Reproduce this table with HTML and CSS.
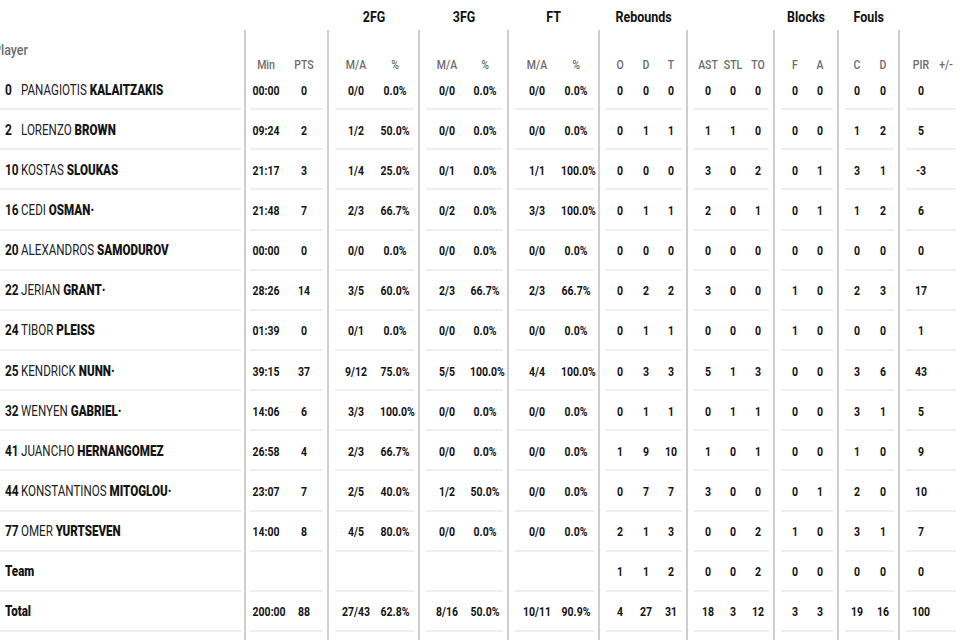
FILE: index.html
```html
<!DOCTYPE html>
<html lang="en">
<head>
<meta charset="utf-8">
<title>Box score</title>
<link rel="stylesheet" href="styles.css">
</head>
<body>
<table class="box">
  <colgroup>
    <col class="w-player"><col class="w-min"><col class="w-2fg"><col class="w-3fg"><col class="w-ft"><col class="w-reb"><col class="w-ast"><col class="w-blk"><col class="w-fls"><col class="w-pir">
  </colgroup>
  <thead>
    <tr class="titles">
      <th></th><th></th><th><span class="t">2FG</span></th><th><span class="t">3FG</span></th><th><span class="t">FT</span></th><th><span class="t">Rebounds</span></th><th></th><th><span class="t">Blocks</span></th><th><span class="t">Fouls</span></th><th></th>
    </tr>
    <tr class="sub">
      <th><div class="in"><span class="plab">Player</span></div></th>
      <th><div class="in"><span class="c">Min</span><span class="c">PTS</span></div></th>
      <th><div class="in"><span class="c">M/A</span><span class="c">%</span></div></th>
      <th><div class="in"><span class="c">M/A</span><span class="c">%</span></div></th>
      <th><div class="in"><span class="c">M/A</span><span class="c">%</span></div></th>
      <th><div class="in"><span class="c">O</span><span class="c">D</span><span class="c">T</span></div></th>
      <th><div class="in"><span class="c">AST</span><span class="c">STL</span><span class="c">TO</span></div></th>
      <th><div class="in"><span class="c">F</span><span class="c">A</span></div></th>
      <th><div class="in"><span class="c">C</span><span class="c">D</span></div></th>
      <th><div class="in"><span class="c">PIR</span><span class="c">+/-</span></div></th>
    </tr>
  </thead>
  <tbody>
    <tr>
      <td><div class="in"><span class="no">0</span><span class="nm"><span class="fn">PANAGIOTIS</span> <b>KALAITZAKIS</b></span></div></td>
      <td><div class="in"><span class="c">00:00</span><span class="c">0</span></div></td>
      <td><div class="in"><span class="c">0/0</span><span class="c">0.0%</span></div></td>
      <td><div class="in"><span class="c">0/0</span><span class="c">0.0%</span></div></td>
      <td><div class="in"><span class="c">0/0</span><span class="c">0.0%</span></div></td>
      <td><div class="in"><span class="c">0</span><span class="c">0</span><span class="c">0</span></div></td>
      <td><div class="in"><span class="c">0</span><span class="c">0</span><span class="c">0</span></div></td>
      <td><div class="in"><span class="c">0</span><span class="c">0</span></div></td>
      <td><div class="in"><span class="c">0</span><span class="c">0</span></div></td>
      <td><div class="in"><span class="c">0</span><span class="c"></span></div></td>
    </tr>
    <tr>
      <td><div class="in"><span class="no">2</span><span class="nm"><span class="fn">LORENZO</span> <b>BROWN</b></span></div></td>
      <td><div class="in"><span class="c">09:24</span><span class="c">2</span></div></td>
      <td><div class="in"><span class="c">1/2</span><span class="c">50.0%</span></div></td>
      <td><div class="in"><span class="c">0/0</span><span class="c">0.0%</span></div></td>
      <td><div class="in"><span class="c">0/0</span><span class="c">0.0%</span></div></td>
      <td><div class="in"><span class="c">0</span><span class="c">1</span><span class="c">1</span></div></td>
      <td><div class="in"><span class="c">1</span><span class="c">1</span><span class="c">0</span></div></td>
      <td><div class="in"><span class="c">0</span><span class="c">0</span></div></td>
      <td><div class="in"><span class="c">1</span><span class="c">2</span></div></td>
      <td><div class="in"><span class="c">5</span><span class="c"></span></div></td>
    </tr>
    <tr>
      <td><div class="in"><span class="no">10</span><span class="nm"><span class="fn">KOSTAS</span> <b>SLOUKAS</b></span></div></td>
      <td><div class="in"><span class="c">21:17</span><span class="c">3</span></div></td>
      <td><div class="in"><span class="c">1/4</span><span class="c">25.0%</span></div></td>
      <td><div class="in"><span class="c">0/1</span><span class="c">0.0%</span></div></td>
      <td><div class="in"><span class="c">1/1</span><span class="c">100.0%</span></div></td>
      <td><div class="in"><span class="c">0</span><span class="c">0</span><span class="c">0</span></div></td>
      <td><div class="in"><span class="c">3</span><span class="c">0</span><span class="c">2</span></div></td>
      <td><div class="in"><span class="c">0</span><span class="c">1</span></div></td>
      <td><div class="in"><span class="c">3</span><span class="c">1</span></div></td>
      <td><div class="in"><span class="c">-3</span><span class="c"></span></div></td>
    </tr>
    <tr>
      <td><div class="in"><span class="no">16</span><span class="nm"><span class="fn">CEDI</span> <b>OSMAN·</b></span></div></td>
      <td><div class="in"><span class="c">21:48</span><span class="c">7</span></div></td>
      <td><div class="in"><span class="c">2/3</span><span class="c">66.7%</span></div></td>
      <td><div class="in"><span class="c">0/2</span><span class="c">0.0%</span></div></td>
      <td><div class="in"><span class="c">3/3</span><span class="c">100.0%</span></div></td>
      <td><div class="in"><span class="c">0</span><span class="c">1</span><span class="c">1</span></div></td>
      <td><div class="in"><span class="c">2</span><span class="c">0</span><span class="c">1</span></div></td>
      <td><div class="in"><span class="c">0</span><span class="c">1</span></div></td>
      <td><div class="in"><span class="c">1</span><span class="c">2</span></div></td>
      <td><div class="in"><span class="c">6</span><span class="c"></span></div></td>
    </tr>
    <tr>
      <td><div class="in"><span class="no">20</span><span class="nm"><span class="fn">ALEXANDROS</span> <b>SAMODUROV</b></span></div></td>
      <td><div class="in"><span class="c">00:00</span><span class="c">0</span></div></td>
      <td><div class="in"><span class="c">0/0</span><span class="c">0.0%</span></div></td>
      <td><div class="in"><span class="c">0/0</span><span class="c">0.0%</span></div></td>
      <td><div class="in"><span class="c">0/0</span><span class="c">0.0%</span></div></td>
      <td><div class="in"><span class="c">0</span><span class="c">0</span><span class="c">0</span></div></td>
      <td><div class="in"><span class="c">0</span><span class="c">0</span><span class="c">0</span></div></td>
      <td><div class="in"><span class="c">0</span><span class="c">0</span></div></td>
      <td><div class="in"><span class="c">0</span><span class="c">0</span></div></td>
      <td><div class="in"><span class="c">0</span><span class="c"></span></div></td>
    </tr>
    <tr>
      <td><div class="in"><span class="no">22</span><span class="nm"><span class="fn">JERIAN</span> <b>GRANT·</b></span></div></td>
      <td><div class="in"><span class="c">28:26</span><span class="c">14</span></div></td>
      <td><div class="in"><span class="c">3/5</span><span class="c">60.0%</span></div></td>
      <td><div class="in"><span class="c">2/3</span><span class="c">66.7%</span></div></td>
      <td><div class="in"><span class="c">2/3</span><span class="c">66.7%</span></div></td>
      <td><div class="in"><span class="c">0</span><span class="c">2</span><span class="c">2</span></div></td>
      <td><div class="in"><span class="c">3</span><span class="c">0</span><span class="c">0</span></div></td>
      <td><div class="in"><span class="c">1</span><span class="c">0</span></div></td>
      <td><div class="in"><span class="c">2</span><span class="c">3</span></div></td>
      <td><div class="in"><span class="c">17</span><span class="c"></span></div></td>
    </tr>
    <tr>
      <td><div class="in"><span class="no">24</span><span class="nm"><span class="fn">TIBOR</span> <b>PLEISS</b></span></div></td>
      <td><div class="in"><span class="c">01:39</span><span class="c">0</span></div></td>
      <td><div class="in"><span class="c">0/1</span><span class="c">0.0%</span></div></td>
      <td><div class="in"><span class="c">0/0</span><span class="c">0.0%</span></div></td>
      <td><div class="in"><span class="c">0/0</span><span class="c">0.0%</span></div></td>
      <td><div class="in"><span class="c">0</span><span class="c">1</span><span class="c">1</span></div></td>
      <td><div class="in"><span class="c">0</span><span class="c">0</span><span class="c">0</span></div></td>
      <td><div class="in"><span class="c">1</span><span class="c">0</span></div></td>
      <td><div class="in"><span class="c">0</span><span class="c">0</span></div></td>
      <td><div class="in"><span class="c">1</span><span class="c"></span></div></td>
    </tr>
    <tr>
      <td><div class="in"><span class="no">25</span><span class="nm"><span class="fn">KENDRICK</span> <b>NUNN·</b></span></div></td>
      <td><div class="in"><span class="c">39:15</span><span class="c">37</span></div></td>
      <td><div class="in"><span class="c">9/12</span><span class="c">75.0%</span></div></td>
      <td><div class="in"><span class="c">5/5</span><span class="c">100.0%</span></div></td>
      <td><div class="in"><span class="c">4/4</span><span class="c">100.0%</span></div></td>
      <td><div class="in"><span class="c">0</span><span class="c">3</span><span class="c">3</span></div></td>
      <td><div class="in"><span class="c">5</span><span class="c">1</span><span class="c">3</span></div></td>
      <td><div class="in"><span class="c">0</span><span class="c">0</span></div></td>
      <td><div class="in"><span class="c">3</span><span class="c">6</span></div></td>
      <td><div class="in"><span class="c">43</span><span class="c"></span></div></td>
    </tr>
    <tr>
      <td><div class="in"><span class="no">32</span><span class="nm"><span class="fn">WENYEN</span> <b>GABRIEL·</b></span></div></td>
      <td><div class="in"><span class="c">14:06</span><span class="c">6</span></div></td>
      <td><div class="in"><span class="c">3/3</span><span class="c">100.0%</span></div></td>
      <td><div class="in"><span class="c">0/0</span><span class="c">0.0%</span></div></td>
      <td><div class="in"><span class="c">0/0</span><span class="c">0.0%</span></div></td>
      <td><div class="in"><span class="c">0</span><span class="c">1</span><span class="c">1</span></div></td>
      <td><div class="in"><span class="c">0</span><span class="c">1</span><span class="c">1</span></div></td>
      <td><div class="in"><span class="c">0</span><span class="c">0</span></div></td>
      <td><div class="in"><span class="c">3</span><span class="c">1</span></div></td>
      <td><div class="in"><span class="c">5</span><span class="c"></span></div></td>
    </tr>
    <tr>
      <td><div class="in"><span class="no">41</span><span class="nm"><span class="fn">JUANCHO</span> <b>HERNANGOMEZ</b></span></div></td>
      <td><div class="in"><span class="c">26:58</span><span class="c">4</span></div></td>
      <td><div class="in"><span class="c">2/3</span><span class="c">66.7%</span></div></td>
      <td><div class="in"><span class="c">0/0</span><span class="c">0.0%</span></div></td>
      <td><div class="in"><span class="c">0/0</span><span class="c">0.0%</span></div></td>
      <td><div class="in"><span class="c">1</span><span class="c">9</span><span class="c">10</span></div></td>
      <td><div class="in"><span class="c">1</span><span class="c">0</span><span class="c">1</span></div></td>
      <td><div class="in"><span class="c">0</span><span class="c">0</span></div></td>
      <td><div class="in"><span class="c">1</span><span class="c">0</span></div></td>
      <td><div class="in"><span class="c">9</span><span class="c"></span></div></td>
    </tr>
    <tr>
      <td><div class="in"><span class="no">44</span><span class="nm"><span class="fn">KONSTANTINOS</span> <b>MITOGLOU·</b></span></div></td>
      <td><div class="in"><span class="c">23:07</span><span class="c">7</span></div></td>
      <td><div class="in"><span class="c">2/5</span><span class="c">40.0%</span></div></td>
      <td><div class="in"><span class="c">1/2</span><span class="c">50.0%</span></div></td>
      <td><div class="in"><span class="c">0/0</span><span class="c">0.0%</span></div></td>
      <td><div class="in"><span class="c">0</span><span class="c">7</span><span class="c">7</span></div></td>
      <td><div class="in"><span class="c">3</span><span class="c">0</span><span class="c">0</span></div></td>
      <td><div class="in"><span class="c">0</span><span class="c">1</span></div></td>
      <td><div class="in"><span class="c">2</span><span class="c">0</span></div></td>
      <td><div class="in"><span class="c">10</span><span class="c"></span></div></td>
    </tr>
    <tr>
      <td><div class="in"><span class="no">77</span><span class="nm"><span class="fn">OMER</span> <b>YURTSEVEN</b></span></div></td>
      <td><div class="in"><span class="c">14:00</span><span class="c">8</span></div></td>
      <td><div class="in"><span class="c">4/5</span><span class="c">80.0%</span></div></td>
      <td><div class="in"><span class="c">0/0</span><span class="c">0.0%</span></div></td>
      <td><div class="in"><span class="c">0/0</span><span class="c">0.0%</span></div></td>
      <td><div class="in"><span class="c">2</span><span class="c">1</span><span class="c">3</span></div></td>
      <td><div class="in"><span class="c">0</span><span class="c">0</span><span class="c">2</span></div></td>
      <td><div class="in"><span class="c">1</span><span class="c">0</span></div></td>
      <td><div class="in"><span class="c">3</span><span class="c">1</span></div></td>
      <td><div class="in"><span class="c">7</span><span class="c"></span></div></td>
    </tr>
    <tr>
      <td><div class="in"><span class="nm"><b>Team</b></span></div></td>
      <td><div class="in"></div></td>
      <td><div class="in"></div></td>
      <td><div class="in"></div></td>
      <td><div class="in"></div></td>
      <td><div class="in"><span class="c">1</span><span class="c">1</span><span class="c">2</span></div></td>
      <td><div class="in"><span class="c">0</span><span class="c">0</span><span class="c">2</span></div></td>
      <td><div class="in"><span class="c">0</span><span class="c">0</span></div></td>
      <td><div class="in"><span class="c">0</span><span class="c">0</span></div></td>
      <td><div class="in"><span class="c">0</span><span class="c"></span></div></td>
    </tr>
    <tr>
      <td><div class="in"><span class="nm"><b>Total</b></span></div></td>
      <td><div class="in"><span class="c">200:00</span><span class="c">88</span></div></td>
      <td><div class="in"><span class="c">27/43</span><span class="c">62.8%</span></div></td>
      <td><div class="in"><span class="c">8/16</span><span class="c">50.0%</span></div></td>
      <td><div class="in"><span class="c">10/11</span><span class="c">90.9%</span></div></td>
      <td><div class="in"><span class="c">4</span><span class="c">27</span><span class="c">31</span></div></td>
      <td><div class="in"><span class="c">18</span><span class="c">3</span><span class="c">12</span></div></td>
      <td><div class="in"><span class="c">3</span><span class="c">3</span></div></td>
      <td><div class="in"><span class="c">19</span><span class="c">16</span></div></td>
      <td><div class="in"><span class="c">100</span><span class="c"></span></div></td>
    </tr>
    <tr class="pad">
      <td></td><td></td><td></td><td></td><td></td><td></td><td></td><td></td><td></td><td></td>
    </tr>
  </tbody>
</table>
</body>
</html>
```

FILE: styles.css
```css
* { box-sizing: border-box; }

html, body {
  margin: 0;
  background: #ffffff;
  overflow: hidden;
}

body {
  font-family: Roboto, "Liberation Sans", sans-serif;
  color: #141414;
}

.box {
  width: 960px;
  table-layout: fixed;
  border-collapse: separate;
  border-spacing: 0;
}

.w-player { width: 244px; }
.w-min { width: 83px; }
.w-2fg { width: 91px; }
.w-3fg { width: 89px; }
.w-ft { width: 91px; }
.w-reb { width: 88px; }
.w-ast { width: 87px; }
.w-blk { width: 64px; }
.w-fls { width: 61px; }
.w-pir { width: 62px; }

.box th, .box td {
  padding: 0;
  vertical-align: top;
  font-weight: 400;
  text-align: left;
}

/* group titles */
.titles th {
  height: 30px;
  padding: 5px 0 0 3px;
  font-size: 14.5px;
  line-height: 25px;
  font-weight: 700;
  text-align: center;
  color: #111;
  white-space: nowrap;
}

.t {
  display: inline-block;
  transform: scaleX(0.86);
}

/* vertical group separators */
.sub th + th,
tbody td + td {
  border-left: 2px solid #cfcfcf;
}

.in {
  display: flex;
  align-items: center;
  height: 40.15px;
  margin: 0 4px 0 6px;
  padding-top: 2px;
  border-bottom: 2px solid #efefef;
  font-size: 12.5px;
  font-weight: 700;
  white-space: nowrap;
}

.c {
  flex: none;
  display: inline-block;
  width: 24px;
  text-align: center;
  transform: scaleX(0.84);
}

/* subheader row */
.sub .in {
  height: 40px;
  align-items: flex-start;
  padding-top: 28px;
  line-height: 14px;
  border-bottom: 0;
  color: #6c6c6c;
  font-weight: 500;
}

.sub th:first-child .in {
  padding-top: 14px;
}

.plab {
  display: inline-block;
  margin-left: -12px;
  transform: scaleX(0.86);
  transform-origin: left center;
}

/* player column */
tr > :nth-child(1) .in {
  margin: 0 3px 0 0;
  padding-left: 5px;
  font-size: 14.5px;
}

.no {
  flex: none;
  display: inline-block;
  width: 16px;
  font-weight: 700;
  transform: scaleX(0.82);
  transform-origin: left center;
}

.nm {
  display: inline-block;
  transform: scaleX(0.8);
  transform-origin: left center;
}

.fn {
  font-weight: 400;
  color: #222;
}

/* Min / PTS */
tr > :nth-child(2) .in { margin-left: 4px; gap: 6px; }
tr > :nth-child(2) .c { width: 32px; }

/* 2FG / 3FG / FT */
tr > :nth-child(3) .in { padding-left: 3px; gap: 3px; }
tr > :nth-child(4) .in { padding-left: 3px; gap: 2px; }
tr > :nth-child(5) .in { padding-left: 4px; gap: 3px; }
tr > :nth-child(3) .c,
tr > :nth-child(4) .c,
tr > :nth-child(5) .c { width: 36px; }

/* Rebounds */
tr > :nth-child(6) .in { padding-left: 2px; gap: 1.5px; }

/* AST / STL / TO */
tr > :nth-child(7) .in { padding-left: 2px; gap: 1px; }

/* Blocks */
tr > :nth-child(8) .in { padding-left: 2px; gap: 1px; }

/* Fouls */
tr > :nth-child(9) .in { padding-left: 0; gap: 2px; }

/* PIR / +/- */
tr > :nth-child(10) .in { padding-left: 3px; gap: 1px; }

.pad td {
  height: 20px;
}
```
